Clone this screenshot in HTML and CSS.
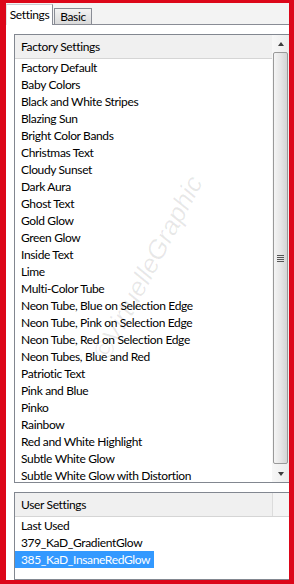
FILE: index.html
```html
<!DOCTYPE html>
<html lang="en">
  <head>
    <meta charset="UTF-8" />
    <title>Effect Settings</title>
    <link rel="stylesheet" href="styles.css">
  </head>
  <body>
    <div class="frame">
      <div class="tabs">
        <div class="tab tab-active">Settings</div>
        <div class="tab">Basic</div>
      </div>

      <div class="panel">
        <div class="listbox listbox-factory">
          <div class="list-main">
            <div class="list-header"><span class="col">Factory Settings</span></div>
            <ul class="list-items">
              <li><span>Factory Default</span></li>
              <li><span>Baby Colors</span></li>
              <li><span>Black and White Stripes</span></li>
              <li><span>Blazing Sun</span></li>
              <li><span>Bright Color Bands</span></li>
              <li><span>Christmas Text</span></li>
              <li><span>Cloudy Sunset</span></li>
              <li><span>Dark Aura</span></li>
              <li><span>Ghost Text</span></li>
              <li><span>Gold Glow</span></li>
              <li><span>Green Glow</span></li>
              <li><span>Inside Text</span></li>
              <li><span>Lime</span></li>
              <li><span>Multi-Color Tube</span></li>
              <li><span>Neon Tube, Blue on Selection Edge</span></li>
              <li><span>Neon Tube, Pink on Selection Edge</span></li>
              <li><span>Neon Tube, Red on Selection Edge</span></li>
              <li><span>Neon Tubes, Blue and Red</span></li>
              <li><span>Patriotic Text</span></li>
              <li><span>Pink and Blue</span></li>
              <li><span>Pinko</span></li>
              <li><span>Rainbow</span></li>
              <li><span>Red and White Highlight</span></li>
              <li><span>Subtle White Glow</span></li>
              <li><span>Subtle White Glow with Distortion</span></li>
            </ul>
          </div>
          <div class="scrollbar">
            <div class="scroll-btn scroll-up"></div>
            <div class="scroll-track">
              <div class="scroll-thumb"><span class="grip"></span></div>
            </div>
            <div class="scroll-btn scroll-down"></div>
          </div>
        </div>

        <div class="listbox listbox-user">
          <div class="list-main">
            <div class="list-header">
              <span class="col col-user">User Settings</span>
              <span class="col-filler"></span>
            </div>
            <ul class="list-items">
              <li><span>Last Used</span></li>
              <li><span>379_KaD_GradientGlow</span></li>
              <li class="selected"><span>385_KaD_InsaneRedGlow</span></li>
            </ul>
          </div>
        </div>

        <div class="watermark">©VirtuelleGraphic</div>
      </div>
    </div>
  </body>
</html>
```

FILE: styles.css
```css
:root {
  --frame-red: #dc0619;
  --tab-border: #898c95;
  --box-border: #828790;
  --header-bg: #f0f0f0;
  --select-bg: #3399ff;
  --text-color: #000;
}

* {
  box-sizing: border-box;
}

html,
body {
  margin: 0;
  padding: 0;
}

body {
  width: 294px;
  height: 584px;
  overflow: hidden;
  font-family: "Lato", "Liberation Sans", sans-serif;
  font-size: 12px;
  letter-spacing: -0.35px;
  color: var(--text-color);
  background: #fff;
}

.frame {
  width: 294px;
  height: 584px;
  border-style: solid;
  border-color: var(--frame-red);
  border-width: 3px 5px 4px 6px;
  background: #f3f3f3;
  display: flex;
  flex-direction: column;
  overflow: hidden;
}

/* tab strip */

.tabs {
  height: 21px;
  flex: none;
  display: flex;
  align-items: flex-end;
  position: relative;
  z-index: 1;
}

.tab {
  height: 16px;
  width: 38px;
  margin-left: 1px;
  border: 1px solid var(--tab-border);
  border-bottom: 0;
  background: linear-gradient(#f3f3f3, #dadada);
  line-height: 16px;
  text-align: center;
}

.tab-active {
  height: 21px;
  width: 47px;
  margin-left: 0;
  margin-bottom: -1px;
  background: #fff;
  border-color: #c9cbd0 var(--tab-border) transparent #e4e4e4;
  line-height: 19px;
}

/* panel */

.panel {
  flex: 1;
  position: relative;
  background: #fff;
  border-top: 1px solid var(--tab-border);
  padding: 9px 0 0 8px;
  display: flex;
  flex-direction: column;
  gap: 9px;
  min-height: 0;
}

.listbox {
  width: calc(100% + 1px);
  display: flex;
  border: 1px solid var(--box-border);
  background: #fff;
  overflow: hidden;
}

.listbox-factory {
  height: 449px;
  flex: none;
}

.listbox-user {
  flex: 1;
}

.list-main {
  flex: 1;
  min-width: 0;
  display: flex;
  flex-direction: column;
}

.list-header {
  height: 24px;
  flex: none;
  display: flex;
  background: var(--header-bg);
  border-bottom: 1px solid #d5d5d5;
}

.col {
  padding-left: 6px;
  line-height: 23px;
  flex: 1;
}

.col-user {
  flex: none;
  width: 258px;
  border-right: 1px solid #dcdcdc;
}

.col-filler {
  flex: 1;
  background: #f4f4f4;
}

.list-items {
  list-style: none;
  margin: 0;
  padding: 0;
}

.list-items li {
  height: 17px;
  line-height: 17px;
  white-space: nowrap;
}

.list-items li span {
  display: inline-block;
  padding: 0 4px 0 6px;
}

.list-items li.selected span {
  background: var(--select-bg);
  color: #fff;
}

/* scrollbar */

.scrollbar {
  width: 17px;
  flex: none;
  display: flex;
  flex-direction: column;
  background: linear-gradient(to right, #f7f7f7, #ececec);
}

.scroll-btn {
  height: 17px;
  flex: none;
  display: flex;
  align-items: center;
  justify-content: center;
}

.scroll-btn::before {
  content: "";
  border-left: 3px solid transparent;
  border-right: 3px solid transparent;
}

.scroll-up::before {
  border-bottom: 4px solid #3c3c3c;
}

.scroll-down::before {
  border-top: 4px solid #3c3c3c;
}

.scroll-track {
  flex: 1;
  display: flex;
  padding: 0 1px 1px 1px;
}

.scroll-thumb {
  flex: 1;
  display: flex;
  align-items: center;
  justify-content: center;
  border: 1px solid #999;
  border-radius: 2px;
  background: linear-gradient(to right, #f4f4f4, #e6e6e6 50%, #d4d4d4);
}

.grip {
  width: 7px;
  height: 7px;
  background: repeating-linear-gradient(#555 0 1px, transparent 1px 2px);
}

/* watermark */

.watermark {
  position: absolute;
  left: 142px;
  top: 243px;
  transform: translate(-50%, -50%) rotate(-62deg);
  font-family: "Liberation Sans", sans-serif;
  font-style: italic;
  font-size: 26px;
  letter-spacing: 0;
  color: rgba(0, 0, 0, 0.09);
  white-space: nowrap;
  pointer-events: none;
}
```
